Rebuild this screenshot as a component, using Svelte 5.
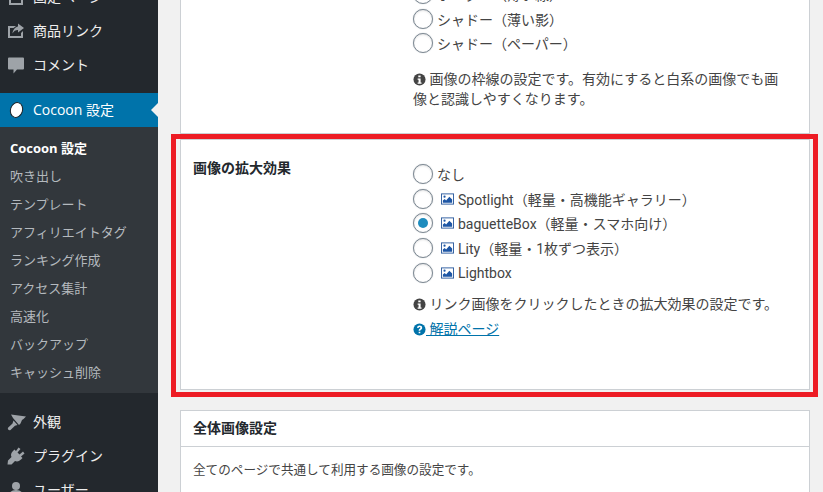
<script>
  const topItems = [
    { label: '固定ページ', icon: 'page' },
    { label: '商品リンク', icon: 'share' },
    { label: 'コメント', icon: 'comment' }
  ];
  const subItems = ['吹き出し', 'テンプレート', 'アフィリエイトタグ', 'ランキング作成', 'アクセス集計', '高速化', 'バックアップ', 'キャッシュ削除'];
  const bottomItems = [
    { label: '外観', icon: 'brush' },
    { label: 'プラグイン', icon: 'plug' },
    { label: 'ユーザー', icon: 'user' }
  ];
  const borderOptions = ['ボーダー（薄い線）', 'シャドー（薄い影）', 'シャドー（ペーパー）'];
  const zoomOptions = [
    { label: 'なし', pic: false, checked: false },
    { label: 'Spotlight（軽量・高機能ギャラリー）', pic: true, checked: false },
    { label: 'baguetteBox（軽量・スマホ向け）', pic: true, checked: true },
    { label: 'Lity（軽量・1枚ずつ表示）', pic: true, checked: false },
    { label: 'Lightbox', pic: true, checked: false }
  ];
</script>

{#snippet menuIcon(name)}
  <svg class="mi" viewBox="0 0 20 20" aria-hidden="true">
    {#if name === 'page'}
      <path d="M3 3h10v2H5v11h10v-5h2v7H3z" />
    {:else if name === 'share'}
      <path d="M2 5h8L7.500 7H4v8h11v-3l2-2v7H2z" /><path d="M12 2.500l6 4.500-6 4.500V9c-2.500 0-4.300 1-5.500 3.500C6.800 9 9 6.200 12 5.500z" />
    {:else if name === 'comment'}
      <path d="M3 2.500h14a1 1 0 0 1 1 1v10a1 1 0 0 1-1 1h-6l-3.500 4v-4H3a1 1 0 0 1-1-1v-10a1 1 0 0 1 1-1z" />
    {:else if name === 'brush'}
      <path d="M5 2.500l15 2-2.500 2.500-1.500 1-1.500 3.500-1.500 1.500-6-7z" /><path d="M7.500 8.500l4 4.500-2.500.8-4.500 4.200c-1.200 1-3.300-.6-2.500-2.200l4.500-4.300z" />
    {:else if name === 'plug'}
      <path d="M1.500 18.500L2 14.500 5.500 11C4.500 9 5 7 7 5L8.500 3.500 10 5 12.500 1.500 14.500 3 11.500 6.500 13.500 8.500 17 5.500 18.500 7.500 15 10.500 16.500 12 15 13.500C13 15.500 11 16 9 15L5.500 18.500z" />
    {:else}
      <circle cx="10" cy="6" r="4" /><path d="M10 10c-4 0-7 2-7 5.500V17h14v-1.500C17 12 14 10 10 10z" />
    {/if}
  </svg>
{/snippet}

{#snippet infoIcon()}
  <svg class="fa" viewBox="0 0 14 14" aria-hidden="true">
    <circle cx="7" cy="7" r="6.500" fill="#444" />
    <path d="M5.700 2.600h2.500v2.100H5.700zM5 5.800h3.200v4.300h1v1.400H5v-1.400h1V7.200H5z" fill="#fff" />
  </svg>
{/snippet}

{#snippet picIcon()}
  <svg class="pic" viewBox="0 0 14 12" aria-hidden="true">
    <rect x=".5" y=".5" width="13" height="11" fill="#fff" stroke="#2b5a9e" />
    <path d="M2 10V7.500L4 6l1.500 1.500L9 3.500l3 3V10z" fill="#1d56a5" />
    <circle cx="3.800" cy="3.500" r="1.200" fill="#1d56a5" />
  </svg>
{/snippet}

<div class="page">
  <nav class="side">
    <ul class="menu first">
      {#each topItems as item}
        <li class="item">{@render menuIcon(item.icon)}<span>{item.label}</span></li>
      {/each}
    </ul>
    <div class="active">
      <svg class="mi cocoon" viewBox="0 0 20 20" aria-hidden="true">
        <ellipse cx="10.500" cy="10" rx="6" ry="7.500" transform="rotate(18 10.500 10)" fill="#fff" stroke="#1c2126" />
      </svg>
      <span>Cocoon 設定</span>
      <i class="notch"></i>
    </div>
    <ul class="sub">
      <li class="current">Cocoon 設定</li>
      {#each subItems as s}<li>{s}</li>{/each}
    </ul>
    <ul class="menu last">
      {#each bottomItems as item}
        <li class="item">{@render menuIcon(item.icon)}<span>{item.label}</span></li>
      {/each}
    </ul>
  </nav>

  <main class="content">
    <section class="card card-top">
      <div class="options">
        {#each borderOptions as o}
          <label class="opt"><span class="radio"></span><span>{o}</span></label>
        {/each}
      </div>
      <p class="note">{@render infoIcon()} 画像の枠線の設定です。有効にすると白系の画像でも画像と認識しやすくなります。</p>
    </section>

    <section class="card card-zoom">
      <h3 class="label">画像の拡大効果</h3>
      <div>
        <div class="options">
          {#each zoomOptions as o}
            <label class="opt">
              <span class="radio" class:on={o.checked}></span>
              {#if o.pic}<span class="picwrap">{@render picIcon()}</span>{/if}
              <span>{o.label}</span>
            </label>
          {/each}
        </div>
        <p class="note tight">{@render infoIcon()} リンク画像をクリックしたときの拡大効果の設定です。</p>
        <a class="help" href="#top">
          <svg class="fa" viewBox="0 0 14 14" aria-hidden="true">
            <circle cx="7" cy="7" r="6.500" fill="#0073aa" />
            <path d="M4.300 5.200C4.500 3.600 5.700 2.800 7.100 2.800c1.600 0 2.800 1 2.800 2.300 0 1.200-.7 1.700-1.400 2.200-.5.300-.7.500-.7 1H6.100c0-1.100.4-1.600 1.100-2.100.5-.4.800-.6.800-1.100 0-.4-.4-.7-.9-.7-.6 0-1 .3-1.100 1zM6.100 9.300h1.800v1.800H6.100z" fill="#fff" />
          </svg><span class="u">&nbsp;解説ページ</span>
        </a>
      </div>
    </section>

    <section class="card card-all">
      <h3 class="head">全体画像設定</h3>
      <p class="desc">全てのページで共通して利用する画像の設定です。</p>
    </section>

    <div class="highlight"></div>
  </main>
</div>

<style>
  :global(body) {
    margin: 0;
    background: #f1f1f1;
  }
  .page {
    display: flex;
    width: 823px;
    height: 492px;
    overflow: hidden;
    font-family: Roboto, "Noto Sans CJK JP", sans-serif;
    font-size: 14px;
    color: #444;
  }
  .side {
    flex: 0 0 158px;
    background: #23282d;
    color: #eee;
    margin-top: -20px;
    height: 600px;
  }
  ul {
    list-style: none;
    margin: 0;
    padding: 0;
  }
  .item {
    display: flex;
    align-items: center;
    box-sizing: border-box;
    height: 34px;
    gap: 7px;
    padding: 0 0 2px 6px;
    font-size: 14px;
  }
  .item .mi {
    margin-bottom: -2px;
  }
  .menu.first {
    margin-bottom: 11px;
  }
  .menu.last {
    margin-top: 12px;
  }
  .mi {
    flex: none;
    width: 20px;
    height: 20px;
    fill: #9ea3a8;
  }
  .active {
    position: relative;
    display: flex;
    align-items: center;
    box-sizing: border-box;
    gap: 7px;
    height: 34px;
    padding: 0 0 2px 6px;
    background: #0073aa;
    color: #fff;
  }
  .active .mi {
    margin-bottom: -2px;
  }
  .active span {
    font-family: "Open Sans", "Noto Sans CJK JP", sans-serif;
  }
  .notch {
    position: absolute;
    right: 0;
    top: 10px;
    border: 7px solid transparent;
    border-right-color: #f1f1f1;
    border-left-width: 0;
  }
  .sub {
    background: #32373c;
    padding: 7px 0;
    color: #b4b9be;
    font-size: 13px;
  }
  .sub li {
    display: flex;
    align-items: center;
    box-sizing: border-box;
    height: 28px;
    padding: 0 0 2px 10px;
  }
  .sub .current {
    color: #fff;
    font-weight: 700;
    font-family: "Open Sans", "Noto Sans CJK JP", sans-serif;
  }
  .content {
    position: relative;
    flex: 1;
    min-width: 0;
    padding: 0 13px 0 22px;
    margin-top: -30px;
  }
  .card {
    background: #fff;
    border: 1px solid #ccd0d4;
    box-sizing: border-box;
  }
  .card-top {
    height: 164px;
    padding: 12px 24px 0 232px;
    margin-bottom: 5px;
    border-top: 0;
  }
  .card-zoom {
    display: grid;
    grid-template-columns: 220px 1fr;
    height: 251px;
    padding: 20px 12px 0 12px;
    margin-bottom: 20px;
  }
  h3 {
    margin: 0;
    font-size: 14px;
    line-height: 18px;
    font-weight: 700;
    color: #23282d;
  }
  .label {
    margin-top: -1px;
  }
  .options {
    display: flex;
    flex-direction: column;
  }
  .card-zoom .options {
    margin-top: 2px;
  }
  .opt {
    display: flex;
    align-items: center;
    height: 24.6px;
    font-size: 14px;
    white-space: nowrap;
  }
  .radio {
    position: relative;
    flex: none;
    box-sizing: border-box;
    width: 20px;
    height: 20px;
    margin-right: 4px;
    border: 1px solid #7e8993;
    border-radius: 50%;
    background: #fff;
    box-shadow: 0 0 1px rgba(126, 137, 147, .7), inset 0 1px 2px rgba(0, 0, 0, .1);
  }
  .radio.on::after {
    content: "";
    position: absolute;
    inset: 4px;
    border-radius: 50%;
    background: #1e8cbe;
  }
  .picwrap {
    display: inline-flex;
    margin: 0 4px;
  }
  .pic {
    width: 13px;
    height: 12px;
  }
  .fa {
    width: 13px;
    height: 13px;
    vertical-align: -2px;
  }
  .note {
    margin: 13px 0 0;
    font-size: 14px;
    line-height: 20px;
    width: 372px;
  }
  .note.tight {
    margin-top: 9px;
    width: auto;
    white-space: nowrap;
  }
  .help {
    display: block;
    margin-top: 5px;
    font-size: 14px;
    line-height: 20px;
    color: #0073aa;
    text-decoration: none;
  }
  .u {
    text-decoration: underline;
  }
  .card-all {
    height: 200px;
  }
  .head {
    height: 36px;
    line-height: 35px;
    padding-left: 12px;
    box-sizing: border-box;
    border-bottom: 1px solid #ccd0d4;
  }
  .desc {
    margin: 13px 0 0 12px;
    font-size: 12.6px;
    line-height: 20px;
  }
  .highlight {
    position: absolute;
    left: 13px;
    top: 164px;
    width: 647px;
    height: 263px;
    box-sizing: border-box;
    border: 5px solid #ed1c24;
    pointer-events: none;
  }
</style>
